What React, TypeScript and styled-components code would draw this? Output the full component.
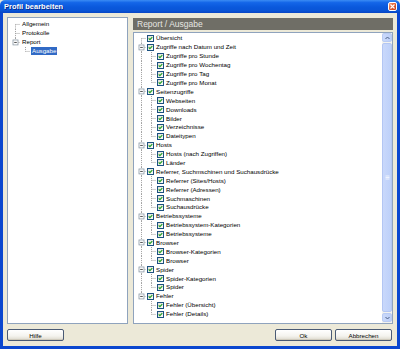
import React from "react";
import styled, { createGlobalStyle } from "styled-components";

const GlobalStyle = createGlobalStyle`
  html, body {
    margin: 0;
    padding: 0;
    background: #ece9d8;
  }
  * {
    box-sizing: border-box;
  }
`;

const ROW_H = 8.9;
const FONT = `"Liberation Sans", Arial, sans-serif`;

const Window = styled.div`
  width: 400px;
  height: 349px;
  display: flex;
  flex-direction: column;
  font-family: ${FONT};
  overflow: hidden;
`;

const TitleBar = styled.div`
  height: 13px;
  display: flex;
  align-items: center;
  justify-content: space-between;
  padding: 0 3px 0 4px;
  border-radius: 5px 5px 0 0;
  background: linear-gradient(#3b8cf4 0%, #1466e8 20%, #0a58dc 55%, #0a55d6 80%, #0846c4 100%);
`;

const Title = styled.span`
  color: #fff;
  font-weight: bold;
  font-size: 7.4px;
  text-shadow: 1px 1px 0 #0a2c8a;
  letter-spacing: 0.05px;
`;

const CloseButton = styled.div`
  width: 9px;
  height: 9px;
  border: 1px solid #fff;
  border-radius: 2px;
  background: linear-gradient(135deg, #f0a080, #e05a2c 50%, #c3401a);
  display: flex;
  align-items: center;
  justify-content: center;
`;

const Body = styled.div`
  flex: 1;
  display: flex;
  flex-direction: column;
  gap: 5px;
  padding: 4px 4px 5px 4px;
  background: #ece9d8;
  border: 3px solid #0b47cf;
  border-top: none;
`;

const Content = styled.div`
  flex: 1;
  display: flex;
  gap: 5px;
  min-height: 0;
`;

const LeftPanel = styled.div`
  width: 121px;
  background: #fff;
  border: 1px solid #8fa3bd;
  padding: 2px 0 0 2px;
`;

const RightColumn = styled.div`
  flex: 1;
  display: flex;
  flex-direction: column;
  gap: 2px;
`;

const Header = styled.div`
  margin-top: 1px;
  height: 12px;
  background: #6f6e66;
  color: #e6e6e2;
  font-size: 8.5px;
  display: flex;
  align-items: center;
  padding-left: 4px;
`;

const TreeBox = styled.div`
  flex: 1;
  display: flex;
  background: #fff;
  border: 1px solid #8fa3bd;
  min-height: 0;
`;

const TreeList = styled.div`
  flex: 1;
  padding: 1px 0 0 2px;
`;

const Row = styled.div`
  height: ${ROW_H}px;
  display: flex;
  align-items: center;
  font-size: 6.2px;
  color: #000;
  white-space: nowrap;
`;

const Label = styled.span<{ $selected?: boolean }>`
  margin-left: 1px;
  padding: 0 1px;
  line-height: ${ROW_H - 1}px;
  background: ${(p) => (p.$selected ? "#316ac5" : "transparent")};
  color: ${(p) => (p.$selected ? "#fff" : "#000")};
`;

const CheckBox = styled.span`
  width: 7px;
  height: 7px;
  margin-left: 1px;
  border: 1px solid #1c5180;
  background: linear-gradient(135deg, #dcdcd4, #fff);
  display: flex;
  align-items: center;
  justify-content: center;
  flex-shrink: 0;
`;

const Scrollbar = styled.div`
  width: 10px;
  display: flex;
  flex-direction: column;
  gap: 1px;
  padding: 0 0 1px 0;
  background: #f3f3ef;
`;

const ScrollButton = styled.div`
  height: 9px;
  border: 1px solid #b9cbf3;
  border-radius: 2px;
  background: linear-gradient(90deg, #cad9fb, #bccff8);
  display: flex;
  align-items: center;
  justify-content: center;
`;

const Thumb = styled.div`
  flex: 1;
  border: 1px solid #b3c6f3;
  border-radius: 2px;
  background: linear-gradient(90deg, #c9d8fb, #bdd0f9);
  display: flex;
  align-items: center;
  justify-content: center;
`;

const ButtonRow = styled.div`
  display: flex;
  gap: 3px;
  padding-right: 1px;
`;

const Spacer = styled.div`
  flex: 1;
`;

const Button = styled.button`
  width: 57px;
  height: 12px;
  padding: 0;
  font-family: ${FONT};
  font-size: 6.2px;
  color: #000;
  border: 1px solid #4a5a74;
  border-radius: 2px;
  background: linear-gradient(#ffffff, #f4f3ee 60%, #dcd8cc);
  box-shadow: inset 0 -1px 0 #d0cbbd;
`;

type Connector = "first" | "mid" | "last" | "only";

const TreeLine: React.FC<{ type?: Connector; through?: boolean; expander?: boolean }> = ({
  type,
  through,
  expander,
}) => {
  const stroke = "#a0a0a0";
  let y1 = 0;
  let y2 = 9;
  if (type === "first") y1 = 4.5;
  if (type === "last") y2 = 4.5;
  return (
    <svg width={10} height={ROW_H} viewBox="0 0 10 9" preserveAspectRatio="none" style={{ flexShrink: 0 }}>
      {(through || (type && type !== "only")) && (
        <line x1={5.5} y1={y1} x2={5.5} y2={y2} stroke={stroke} strokeWidth={1} strokeDasharray="1 1" />
      )}
      {type && <line x1={5.5} y1={4.5} x2={10} y2={4.5} stroke={stroke} strokeWidth={1} strokeDasharray="1 1" />}
      {expander && (
        <g>
          <rect x={3} y={2} width={5} height={5} fill="#fff" stroke="#8c9aa6" strokeWidth={0.8} />
          <line x1={4.2} y1={4.5} x2={6.8} y2={4.5} stroke="#222" strokeWidth={0.8} />
        </g>
      )}
    </svg>
  );
};

const Check = () => (
  <svg width={5} height={5} viewBox="0 0 5 5">
    <path d="M0.7 2.4 L1.9 3.6 L4.3 1.1" fill="none" stroke="#21a121" strokeWidth={1.2} />
  </svg>
);

type Node = { label: string; children?: string[] };

const navTree: Node[] = [
  { label: "Allgemein" },
  { label: "Protokolle" },
  { label: "Report", children: ["Ausgabe"] },
];

const reportTree: Node[] = [
  { label: "Übersicht" },
  {
    label: "Zugriffe nach Datum und Zeit",
    children: ["Zugriffe pro Stunde", "Zugriffe pro Wochentag", "Zugriffe pro Tag", "Zugriffe pro Monat"],
  },
  { label: "Seitenzugriffe", children: ["Webseiten", "Downloads", "Bilder", "Verzeichnisse", "Dateitypen"] },
  { label: "Hosts", children: ["Hosts (nach Zugriffen)", "Länder"] },
  {
    label: "Referrer, Suchmschinen und Suchausdrücke",
    children: ["Referrer (Sites/Hosts)", "Referrer (Adressen)", "Suchmaschinen", "Suchausdrücke"],
  },
  { label: "Betriebssysteme", children: ["Betriebssystem-Kategorien", "Betriebssysteme"] },
  { label: "Browser", children: ["Browser-Kategorien", "Browser"] },
  { label: "Spider", children: ["Spider-Kategorien", "Spider"] },
  { label: "Fehler", children: ["Fehler (Übersicht)", "Fehler (Details)"] },
];

const rootType = (i: number, n: number): Connector =>
  n === 1 ? "only" : i === 0 ? "first" : i === n - 1 ? "last" : "mid";

const Tree: React.FC<{ nodes: Node[]; checks?: boolean; selected?: string }> = ({ nodes, checks, selected }) => (
  <>
    {nodes.map((node, i) => {
      const lastRoot = i === nodes.length - 1;
      return (
        <React.Fragment key={node.label + i}>
          <Row>
            <TreeLine type={rootType(i, nodes.length)} expander={!!node.children} />
            {checks && (
              <CheckBox>
                <Check />
              </CheckBox>
            )}
            <Label $selected={selected === node.label}>{node.label}</Label>
          </Row>
          {node.children?.map((child, j) => (
            <Row key={child + j}>
              <TreeLine through={!lastRoot} />
              <TreeLine type={j === node.children!.length - 1 ? "last" : "mid"} />
              {checks && (
                <CheckBox>
                  <Check />
                </CheckBox>
              )}
              <Label $selected={selected === child}>{child}</Label>
            </Row>
          ))}
        </React.Fragment>
      );
    })}
  </>
);

const Arrow: React.FC<{ up?: boolean }> = ({ up }) => (
  <svg width={5} height={4} viewBox="0 0 5 4">
    <path d={up ? "M0.5 3 L2.5 1 L4.5 3" : "M0.5 1 L2.5 3 L4.5 1"} fill="none" stroke="#4d6185" strokeWidth={1} />
  </svg>
);

const Grip = () => (
  <svg width={5} height={5} viewBox="0 0 5 5">
    <line x1={0.5} y1={1} x2={4.5} y2={1} stroke="#eef3fe" />
    <line x1={0.5} y1={2.5} x2={4.5} y2={2.5} stroke="#eef3fe" />
    <line x1={0.5} y1={4} x2={4.5} y2={4} stroke="#eef3fe" />
  </svg>
);

const App: React.FC = () => {
  return (
    <>
      <GlobalStyle />
      <Window>
        <TitleBar>
          <Title>Profil bearbeiten</Title>
          <CloseButton>
            <svg width={5} height={5} viewBox="0 0 5 5">
              <path d="M0.5 0.5 L4.5 4.5 M4.5 0.5 L0.5 4.5" stroke="#fff" strokeWidth={1.1} />
            </svg>
          </CloseButton>
        </TitleBar>
        <Body>
          <Content>
            <LeftPanel>
              <Tree nodes={navTree} selected="Ausgabe" />
            </LeftPanel>
            <RightColumn>
              <Header>Report / Ausgabe</Header>
              <TreeBox>
                <TreeList>
                  <Tree nodes={reportTree} checks />
                </TreeList>
                <Scrollbar>
                  <ScrollButton>
                    <Arrow up />
                  </ScrollButton>
                  <Thumb>
                    <Grip />
                  </Thumb>
                  <ScrollButton>
                    <Arrow />
                  </ScrollButton>
                </Scrollbar>
              </TreeBox>
            </RightColumn>
          </Content>
          <ButtonRow>
            <Button>Hilfe</Button>
            <Spacer />
            <Button>Ok</Button>
            <Button>Abbrechen</Button>
          </ButtonRow>
        </Body>
      </Window>
    </>
  );
};

export default App;
